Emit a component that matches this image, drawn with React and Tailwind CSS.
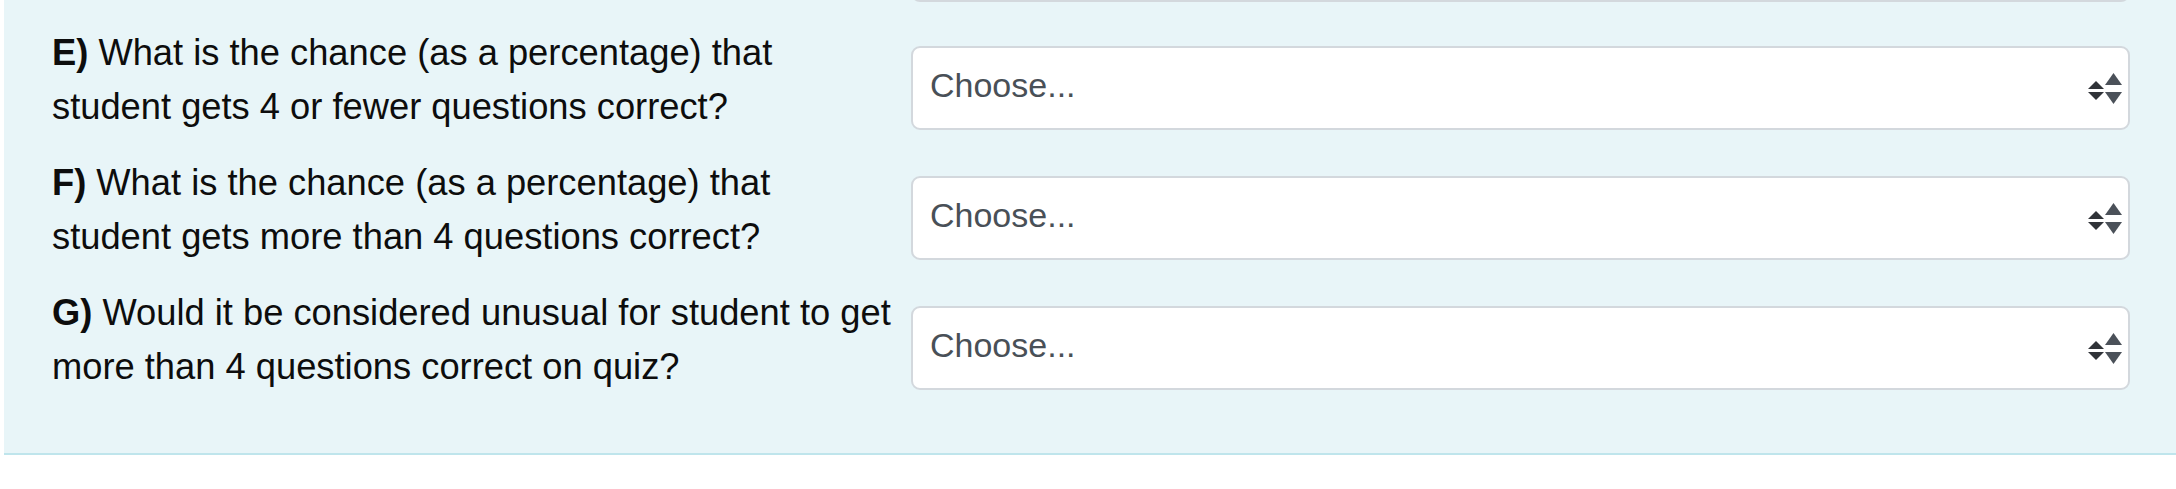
import React from "react";

function Arrows() {
  return (
    <svg width="34" height="31" viewBox="0 0 34 31" className="shrink-0">
      <polygon points="8,8 16,16 0,16" fill="#303338" />
      <polygon points="0,19 16,19 8,27" fill="#303338" />
      <polygon points="25.5,0 34,12 17,12" fill="#4b5159" />
      <polygon points="17,19 34,19 25.5,31" fill="#4b5159" />
    </svg>
  );
}

function Select() {
  return (
    <div className="mt-[20px] flex h-[84px] flex-1 items-center justify-between rounded-[9px] border-2 border-[#d3d8dd] bg-white pl-[17px] pr-[6px]">
      <span className="pb-[5px] text-[34px] text-[#495057]">Choose...</span>
      <Arrows />
    </div>
  );
}

function Row({ letter, line1, line2 }) {
  return (
    <div className="flex items-start">
      <div className="w-[859px] shrink-0 text-[36.3px] leading-[54px] text-[#0d0d0d]">
        <span className="font-bold">{letter}</span> {line1}
        <br />
        {line2}
      </div>
      <Select />
    </div>
  );
}

export default function App() {
  return (
    <div className="min-h-[489px] w-[2176px] bg-white font-['Liberation_Sans',Arial,sans-serif]">
      <div className="ml-[4px] border-b-2 border-[#bfe5ec] bg-[#e8f5f8] pb-[59px] pl-[48px] pr-[46px]">
        <div className="flex">
          <div className="w-[859px] shrink-0" />
          <div className="h-[2px] flex-1 overflow-hidden">
            <div className="-mt-[82px] h-[84px] rounded-[9px] border-2 border-[#d3d8dd] bg-white" />
          </div>
        </div>
        <div className="mt-[24px] flex flex-col gap-[22px]">
          <Row
            letter="E)"
            line1="What is the chance (as a percentage) that"
            line2="student gets 4 or fewer questions correct?"
          />
          <Row
            letter="F)"
            line1="What is the chance (as a percentage) that"
            line2="student gets more than 4 questions correct?"
          />
          <Row
            letter="G)"
            line1="Would it be considered unusual for student to get"
            line2="more than 4 questions correct on quiz?"
          />
        </div>
      </div>
    </div>
  );
}
